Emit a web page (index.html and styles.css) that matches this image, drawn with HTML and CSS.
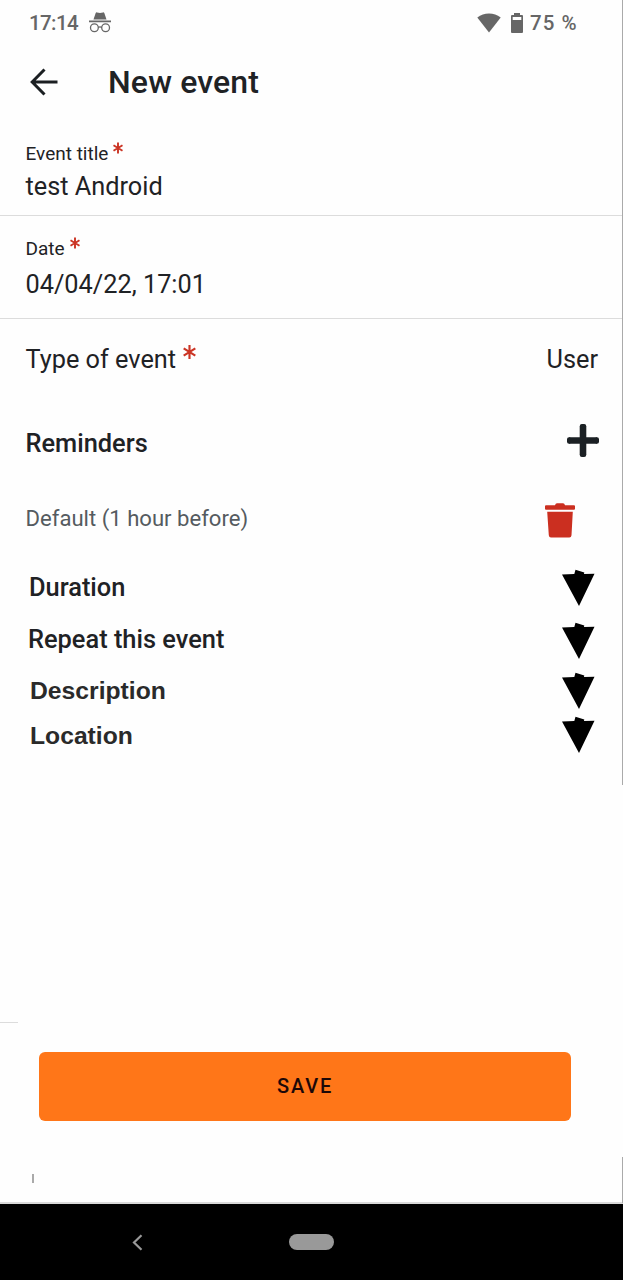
FILE: index.html
```html
<!DOCTYPE html>
<html lang="en">

<head>
    <meta charset="UTF-8">
    <meta name="viewport" content="width=device-width, initial-scale=1.0">
    <title>New event</title>
    <link rel="stylesheet" href="styles.css">
</head>

<body>
    <div class="screen">
        <div class="status">
            <div class="time">17:14</div>
            <svg class="incognito" width="22" height="21" viewBox="0 0 22 21">
                <path fill="#666" d="M4.5 7.5 6.6 1.2Q7 .2 8 .4L11 1l3-.6q1-.2 1.4.8l2.1 6.3zM0 8.6h22v1.6H0z" />
                <g fill="none" stroke="#666" stroke-width="1.3">
                    <circle cx="5.4" cy="15.8" r="3.9" />
                    <circle cx="16.6" cy="15.8" r="3.9" />
                    <path d="M9.2 15.4q1.8-1.2 3.6 0" />
                </g>
            </svg>
            <svg class="wifi" width="24" height="20" viewBox="0 0 24 20">
                <path fill="#666" d="M12 19.5.3 4.6Q5.5.4 12 .4t11.7 4.2z" />
            </svg>
            <svg class="battery" width="12" height="20" viewBox="0 0 12 20">
                <path fill="#666" fill-rule="evenodd" d="M3 0h6v2h2q1 0 1 1v16q0 1-1 1H1q-1 0-1-1V3q0-1 1-1h2zM1.7 4v3h8.6V4z" />
            </svg>
            <div class="percent">75 %</div>
        </div>

        <div class="header">
            <svg class="back" width="28" height="28" viewBox="0 0 28 28">
                <path fill="none" stroke="#1b1f22" stroke-width="3" d="M27.5 14H2.5M14.5 1.5 2.2 14l12.3 12.5" />
            </svg>
            <h1>New event</h1>
        </div>

        <div class="field title">
            <div class="label">Event title <svg class="star" width="10" height="12" viewBox="0 0 12 13"><path d="M6 0v13M.6 3.2l10.8 6.6M.6 9.8 11.4 3.2" /></svg></div>
            <div class="value">test Android</div>
        </div>
        <div class="field date">
            <div class="label">Date <svg class="star" width="10" height="12" viewBox="0 0 12 13"><path d="M6 0v13M.6 3.2l10.8 6.6M.6 9.8 11.4 3.2" /></svg></div>
            <div class="value">04/04/22, 17:01</div>
        </div>

        <div class="row type">
            <div class="name">Type of event <svg class="star" width="13" height="14" viewBox="0 0 12 13"><path d="M6 0v13M.6 3.2l10.8 6.6M.6 9.8 11.4 3.2" /></svg></div>
            <div class="user">User</div>
        </div>
        <div class="row reminders">
            <h2>Reminders</h2>
            <svg class="plus" width="32" height="33" viewBox="0 0 32 33">
                <path fill="none" stroke="#1b2024" stroke-width="6.6" d="M16 2v29M2 16.5h28" />
                <path fill="none" stroke="#1b2024" stroke-width="4" stroke-linecap="round" d="M14.8 2h2.4M14.8 31h2.4M2 15.3v2.4M30 15.3v2.4" />
            </svg>
        </div>
        <div class="row default">
            <div class="text">Default (1 hour before)</div>
            <svg class="trash" width="30" height="35" viewBox="0 0 30 35">
                <path fill="#cb2f20" d="M1 2.3h9Q10.5.3 12 .3h6q1.5 0 2 2h9q1 0 1 1v2.5q0 1-1 1H1q-1 0-1-1V3.3q0-1 1-1zM2.2 8.7h25.6l-1.3 23.6q-.2 2.2-2.2 2.2H6q-2 0-2.2-2.2z" />
            </svg>
        </div>

        <div class="row more duration">
            <h2>Duration</h2>
            <svg class="arrow" width="34" height="38" viewBox="0 0 34 38"><path d="M1 5.5 13.3 5l1.2-4.3 8.8 2.7L23 5l10.5-.2L18 37z" /></svg>
        </div>
        <div class="row more repeat">
            <h2>Repeat this event</h2>
            <svg class="arrow" width="34" height="38" viewBox="0 0 34 38"><path d="M1 5.5 13.3 5l1.2-4.3 8.8 2.7L23 5l10.5-.2L18 37z" /></svg>
        </div>
        <div class="row more description">
            <h2>Description</h2>
            <svg class="arrow" width="34" height="38" viewBox="0 0 34 38"><path d="M1 5.5 13.3 5l1.2-4.3 8.8 2.7L23 5l10.5-.2L18 37z" /></svg>
        </div>
        <div class="row more location">
            <h2>Location</h2>
            <svg class="arrow" width="34" height="38" viewBox="0 0 34 38"><path d="M1 5.5 13.3 5l1.2-4.3 8.8 2.7L23 5l10.5-.2L18 37z" /></svg>
        </div>

        <div class="bottom">
            <div class="line"></div>
            <button class="save">SAVE</button>
            <div class="tick"></div>
        </div>

        <div class="nav">
            <svg class="nav-back" width="11" height="17" viewBox="0 0 11 17">
                <path fill="none" stroke="#999" stroke-width="2.2" d="M9.5 1.2 2 8.5l7.5 7.3" />
            </svg>
            <div class="home"></div>
        </div>

        <div class="edge edge-top"></div>
        <div class="edge edge-bottom"></div>
    </div>
</body>

</html>
```
FILE: styles.css
```css
* {
    box-sizing: border-box;
}

body {
    margin: 0;
    background-color: #fefefe;
    color: #1f2225;
    font-family: Roboto, "Liberation Sans", sans-serif;
}

h1, h2 {
    margin: 0;
    font-weight: 500;
}

svg {
    display: block;
    flex-shrink: 0;
}

.screen {
    position: relative;
    width: 623px;
    height: 1280px;
    display: flex;
    flex-direction: column;
    overflow: hidden;
}

.status {
    height: 45px;
    padding: 0 45px 0 29px;
    display: flex;
    align-items: center;
    color: #666;
    font-size: 20.5px;
    font-weight: 500;
}

.time {
    width: 49px;
    letter-spacing: -0.6px;
}

.incognito {
    margin-left: 11px;
}

.wifi {
    margin-left: auto;
}

.battery {
    margin: 0 7px 0 10px;
}

.percent {
    width: 48px;
    letter-spacing: 1px;
}

.header {
    height: 74px;
    padding-left: 30px;
    display: flex;
    align-items: center;
}

.header h1 {
    margin-left: 50px;
    font-size: 32px;
    letter-spacing: 0.15px;
}

.field {
    padding-left: 25.5px;
    border-bottom: 1px solid #dcdcdc;
}

.label {
    display: flex;
    font-size: 19px;
    line-height: 24px;
}

.value {
    font-size: 25.3px;
    line-height: 32px;
}

.title {
    height: 97px;
    padding-top: 23px;
}

.title .value {
    margin-top: 5px;
}

.date {
    height: 103px;
    padding-top: 21px;
}

.date .value {
    margin-top: 8px;
}

.star {
    margin-left: 5px;
    fill: none;
    stroke: #cb3525;
    stroke-width: 2.3;
}

.row {
    padding-left: 25.5px;
    display: flex;
    justify-content: space-between;
    align-items: center;
}

.row h2 {
    font-size: 25.4px;
}

.type {
    height: 82px;
    padding-right: 25px;
    padding-bottom: 2px;
    font-size: 25.3px;
}

.name {
    display: flex;
}

.name .star {
    margin-left: 7px;
    stroke-width: 2;
}

.reminders {
    height: 84px;
    padding-right: 24px;
}

.plus {
    margin-bottom: 5px;
}

.default {
    height: 68px;
    padding-right: 48px;
    color: #555b60;
    font-size: 22.1px;
}

.text {
    margin-bottom: 2px;
}

.trash {
    margin-top: 2px;
}

.more {
    height: 52px;
    padding: 0 28px 0 29px;
}

.duration {
    margin-top: 8px;
}

.duration .arrow {
    margin-top: 2px;
}

.repeat {
    padding-left: 28px;
}

.repeat .arrow {
    margin-top: 4px;
}

.description,
.location {
    padding-left: 30px;
}

.description h2,
.location h2 {
    font-family: "Liberation Sans", Arial, sans-serif;
    font-size: 24.7px;
    font-weight: bold;
    color: #2a2a2a;
}

.location {
    height: 38px;
}

.location .arrow {
    margin-bottom: 2px;
}

.arrow {
    fill: #000;
}

.bottom {
    flex: 1;
    padding-top: 267px;
    border-bottom: 2px solid #dadada;
}

.line {
    width: 18px;
    height: 1px;
    background-color: #dcdcdc;
}

.save {
    display: block;
    width: 532px;
    height: 69px;
    margin: 29px 0 0 39px;
    padding: 0 0 2px;
    border: none;
    border-radius: 6px;
    background-color: #ff7618;
    color: #1c0808;
    font-family: inherit;
    font-size: 20px;
    font-weight: 500;
    letter-spacing: 1.8px;
}

.tick {
    width: 2px;
    height: 9px;
    margin: 53px 0 0 32px;
    background-color: #aaa;
}

.nav {
    height: 76px;
    padding-left: 132px;
    display: flex;
    align-items: center;
    background-color: #000;
}

.home {
    width: 45px;
    height: 16px;
    margin-left: 146px;
    border-radius: 8px;
    background-color: #999;
}

/* thin shadow lines on the right side of the screen */
.edge {
    position: absolute;
    right: 0;
    width: 1px;
    background-color: #aaa;
}

.edge-top {
    top: 0;
    height: 785px;
}

.edge-bottom {
    top: 1157px;
    height: 46px;
}
```
